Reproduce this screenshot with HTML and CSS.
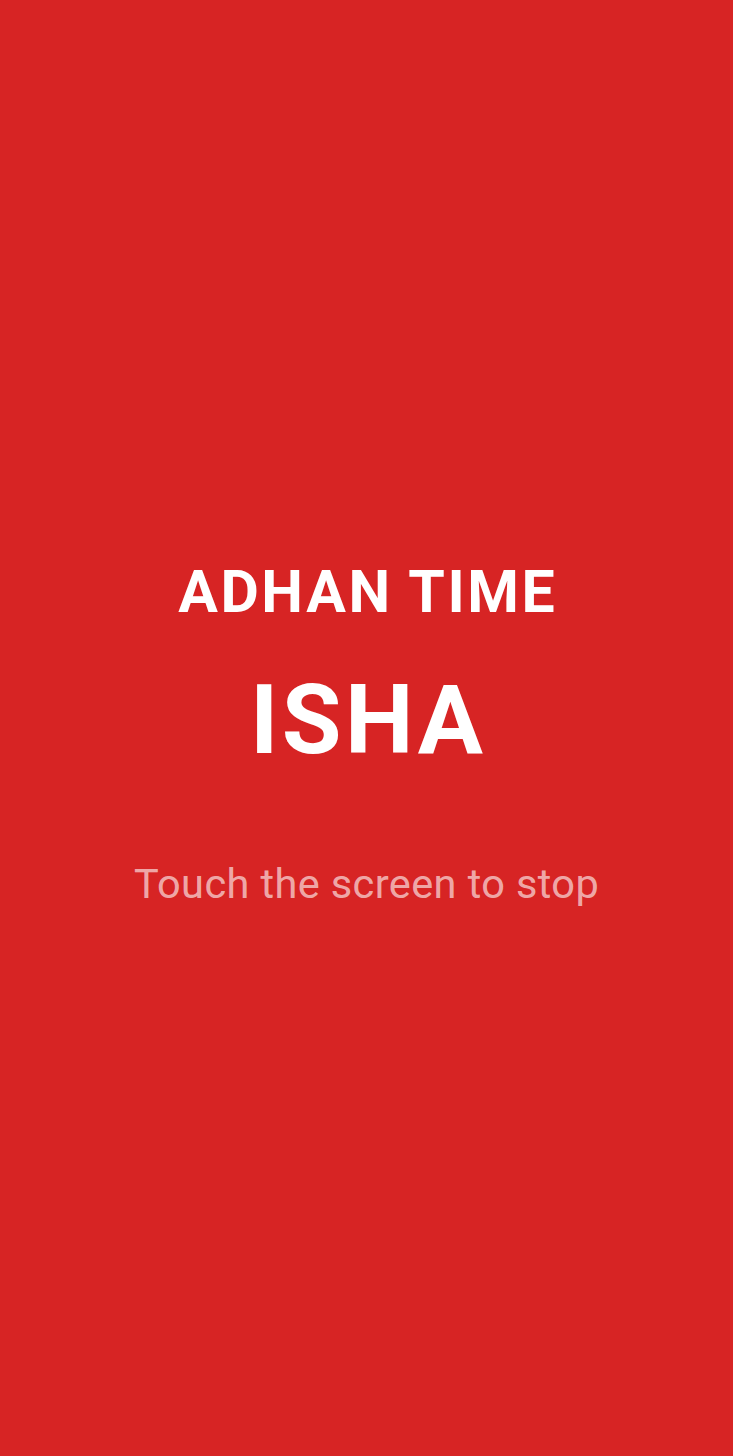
FILE: index.html
```html
<!DOCTYPE html>
<html>
<head>
<meta charset="utf-8">
<link rel="stylesheet" href="styles.css">
</head>
<body>
<main class="screen">
  <div class="content">
    <h1 class="label">ADHAN TIME</h1>
    <h2 class="prayer">ISHA</h2>
    <p class="hint">Touch the screen to stop</p>
  </div>
</main>
</body>
</html>
```

FILE: styles.css
```css
html, body {
  margin: 0;
  padding: 0;
  height: 100%;
}
body {
  background: #d72424;
  font-family: Roboto, "Noto Sans", sans-serif;
}
.screen {
  height: 1456px;
  display: flex;
  flex-direction: column;
  align-items: center;
  box-sizing: border-box;
  padding-top: 556px;
}
.content {
  display: flex;
  flex-direction: column;
  align-items: center;
}
.label {
  margin: 0;
  color: #fff;
  font-weight: 700;
  font-size: 59px;
  line-height: 72px;
  letter-spacing: 2.6px;
  text-indent: 2.6px;
}
.prayer {
  margin: 36px 0 0;
  color: #fff;
  font-weight: 700;
  font-size: 97px;
  line-height: 112px;
  letter-spacing: 3.5px;
  text-indent: 3.5px;
}
.hint {
  margin: 80px 0 0;
  color: rgba(255, 255, 255, 0.62);
  font-weight: 400;
  font-size: 41.5px;
  line-height: 56px;
  letter-spacing: 0.4px;
}
```
